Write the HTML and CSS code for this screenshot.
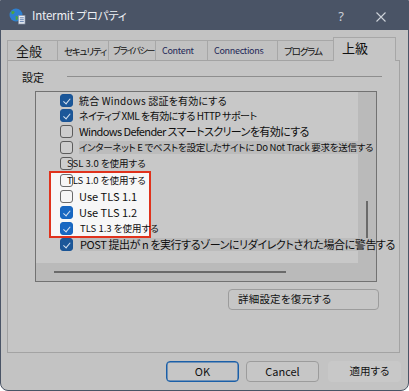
FILE: index.html
```html
<!DOCTYPE html>
<html lang="ja">
<head>
<meta charset="utf-8">
<title>Intermit プロパティ</title>
<link rel="stylesheet" href="styles.css">
</head>
<body>
<div class="window">
  <div class="titlebar">
    <svg class="app-icon" width="18" height="18" viewBox="0 0 18 18">
      <circle cx="8" cy="8" r="6.5" fill="#2f7fcf"/>
      <path d="M3.2 4.6 q2.2 -1.6 3.6 0.4 q-0.6 2.2 -3 2.2 z M7.6 9 q2.4 -0.4 2.4 2 q-0.8 2.2 -2.2 2.4 z" fill="#4aa63c"/>
      <rect x="10.5" y="8.5" width="6.5" height="8.5" fill="#e9edf3" stroke="#8592a6" stroke-width="0.7"/>
      <path d="M11.8 10.8h4 M11.8 12.7h4 M11.8 14.6h4" stroke="#3f649e" stroke-width="0.8"/>
    </svg>
    <span class="title">Intermit プロパティ</span>
    <span class="help">?</span>
    <svg class="close" width="10" height="10" viewBox="0 0 10 10">
      <path d="M0.5 0.5 L9.5 9.5 M9.5 0.5 L0.5 9.5" stroke="#cdd2d9" stroke-width="1.1"/>
    </svg>
  </div>
  <div class="body">
    <div class="tabs">
      <div class="tab tab-general">全般</div>
      <div class="tab tab-security">セキュリティ</div>
      <div class="tab tab-privacy">プライバシー</div>
      <div class="tab tab-content">Content</div>
      <div class="tab tab-connections">Connections</div>
      <div class="tab tab-programs">プログラム</div>
      <div class="tab tab-advanced active">上級</div>
    </div>
    <div class="panel">
      <div class="group-head">
        <span class="group-label">設定</span>
        <div class="rule"></div>
      </div>
      <div class="listbox">
        <div class="rows">
          <div class="row r1"><span class="cb on"></span><span class="lbl">統合 Windows 認証を有効にする</span></div>
          <div class="row r2"><span class="cb on"></span><span class="lbl">ネイティブ XML を有効にする HTTP サポート</span></div>
          <div class="row r3"><span class="cb"></span><span class="lbl">Windows Defender スマートスクリーンを有効にする</span></div>
          <div class="row r4"><span class="cb"></span><span class="lbl sel">インターネット E でベストを設定したサイトに Do Not Track 要求を送信する</span></div>
          <div class="row r5"><span class="cb"></span><span class="lbl tight">SSL 3.0 を使用する</span></div>
          <div class="row r6"><span class="cb lit"></span><span class="lbl tight">TLS 1.0 を使用する</span></div>
          <div class="row r7"><span class="cb lit"></span><span class="lbl">Use TLS 1.1</span></div>
          <div class="row r8"><span class="cb on lit"></span><span class="lbl">Use TLS 1.2</span></div>
          <div class="row r9"><span class="cb on lit"></span><span class="lbl">TLS 1.3 を使用する</span></div>
          <div class="row r10"><span class="cb on"></span><span class="lbl sel">POST 提出が n を実行するゾーンにリダイレクトされた場合に警告する</span></div>
        </div>
        <div class="vscroll"><div class="vthumb"></div></div>
        <div class="hscroll"><div class="hthumb"></div></div>
        <div class="corner"></div>
        <div class="redbox"></div>
      </div>
      <div class="restore-row">
        <button class="btn restore">詳細設定を復元する</button>
      </div>
    </div>
    <div class="buttons">
      <button class="btn ok">OK</button>
      <button class="btn cancel">Cancel</button>
      <button class="btn apply">適用する</button>
    </div>
  </div>
</div>
</body>
</html>
```

FILE: styles.css
```css
html, body {
  margin: 0;
  padding: 0;
  background: #ffffff;
}

body {
  font-family: "Noto Sans CJK JP", "Noto Sans", sans-serif;
  font-feature-settings: "palt";
  color: #111111;
}

.window {
  width: 409px;
  height: 391px;
  box-sizing: border-box;
  border: 1px solid #4a5466;
  border-radius: 0 0 8px 8px;
  background: #c3c3c3;
  overflow: hidden;
  display: flex;
  flex-direction: column;
}

/* ---------- title bar ---------- */
.titlebar {
  height: 29px;
  flex: none;
  background: #4a5466;
  display: flex;
  align-items: center;
  color: #eef0f3;
}

.app-icon {
  margin-left: 7px;
  margin-top: 1px;
}

.title {
  margin-left: 6px;
  font-size: 11.5px;
  letter-spacing: -0.2px;
  line-height: 1;
  margin-top: 1px;
}

.help {
  margin-left: auto;
  font-family: "Noto Sans", sans-serif;
  font-size: 13px;
  line-height: 1;
  color: #c9ced6;
  margin-top: 2px;
}

.close {
  margin-left: 32px;
  margin-right: 22px;
  margin-top: 2px;
}

/* ---------- body ---------- */
.body {
  flex: 1;
  display: flex;
  flex-direction: column;
  padding: 7px 8px 0 6px;
}

.tabs {
  height: 23px;
  display: flex;
  align-items: flex-end;
  position: relative;
  z-index: 1;
}

.tab {
  box-sizing: border-box;
  height: 20px;
  border: 1px solid #a7a7a7;
  border-bottom: none;
  border-right: none;
  background: #c1c1c1;
  display: flex;
  align-items: center;
  padding-left: 6px;
  font-size: 9.5px;
  letter-spacing: -1.2px;
  white-space: nowrap;
  color: #111;
}

.tab-general { width: 50px; padding-left: 8px; font-size: 13px; letter-spacing: 0; }
.tab-security { width: 51px; }
.tab-privacy { width: 47px; padding-left: 4px; font-size: 9px; letter-spacing: -1.4px; }
.tab-content { width: 52px; font-size: 9px; letter-spacing: -0.3px; color: #1d2656; }
.tab-connections { width: 70px; font-size: 9px; letter-spacing: -0.3px; color: #1d2656; }
.tab-programs { width: 56px; letter-spacing: -1.1px; }

.tab.active {
  width: 63px;
  height: 24px;
  margin-bottom: -1px;
  border-right: 1px solid #a7a7a7;
  background: #c5c5c5;
  padding-left: 8px;
  padding-bottom: 5px;
  font-size: 13px;
  letter-spacing: 0;
}

.panel {
  height: 293px;
  box-sizing: border-box;
  border: 1px solid #a3a3a3;
  background: #c5c5c5;
  display: flex;
  flex-direction: column;
}

.group-head {
  height: 30px;
  display: flex;
  align-items: center;
  padding-left: 14px;
  padding-right: 17px;
}

.group-label {
  width: 45px;
  font-size: 11px;
  line-height: 1;
  margin-top: 2px;
}

.rule {
  flex: 1;
  height: 1px;
  background: #8e8e8e;
}

/* ---------- list box ---------- */
.listbox {
  position: relative;
  margin-left: 27px;
  width: 342px;
  height: 191px;
  box-sizing: border-box;
  border: 1px solid #727272;
  background: #c8c8c8;
  display: grid;
  grid-template-columns: 322px 18px;
  grid-template-rows: 171px 18px;
}

.rows {
  grid-column: 1;
  grid-row: 1;
  padding-top: 1px;
  position: relative;
  z-index: 2;
  min-width: 0;
}

.row {
  display: flex;
  align-items: center;
  padding-left: 24px;
  height: 16px;
  white-space: nowrap;
}

.r1, .r2 { height: 15px; }
.r5, .r10 { height: 17px; }

.cb {
  flex: none;
  width: 13px;
  height: 13px;
  box-sizing: border-box;
  border: 1px solid #5c5c5c;
  border-radius: 3px;
  background: #cdcdcd;
  position: relative;
}

.cb.lit {
  background: #f6f6f6;
  border-color: #6a6a6a;
}

.cb.on {
  border-color: #1a5495;
  background: #1b5799;
}

.cb.on.lit {
  border-color: #1565c0;
  background: #1868c2;
}

.cb.on::after {
  content: "";
  position: absolute;
  left: 4px;
  top: 2px;
  width: 3px;
  height: 5.5px;
  border-right: 1px solid #d7e2f0;
  border-bottom: 1px solid #d7e2f0;
  transform: rotate(40deg);
}

.lbl {
  position: relative;
  margin-left: 6px;
  font-size: 9.5px;
  line-height: 13px;
  color: #0e0e0e;
}

.lbl.tight {
  margin-left: -6px;
}

.lbl.sel {
  flex: 1;
  background: #bcbcbc;
  min-width: 0;
}

.r1 .lbl { font-size: 10px; letter-spacing: 0.2px; }
.r2 .lbl { font-size: 10px; letter-spacing: -0.5px; }
.r3 .lbl { font-size: 11px; letter-spacing: -0.6px; }
.r4 .lbl { font-size: 9.5px; letter-spacing: -0.27px; }
.r7 .lbl, .r8 .lbl { font-size: 11px; }
.r9 .lbl { margin-left: 7px; }
.r10 .lbl { font-size: 11px; margin-left: 7px; letter-spacing: -0.42px; }

.vscroll {
  grid-column: 2;
  grid-row: 1;
  background: #bababa;
  position: relative;
}

.vthumb {
  position: absolute;
  left: 8px;
  top: 109px;
  width: 2px;
  height: 37px;
  background: #6a6a6a;
}

.hscroll {
  grid-column: 1;
  grid-row: 2;
  background: #bababa;
  position: relative;
}

.hthumb {
  position: absolute;
  left: 18px;
  top: 8px;
  width: 232px;
  height: 2px;
  background: #6a6a6a;
}

.corner {
  grid-column: 2;
  grid-row: 2;
  background: #bababa;
}

.redbox {
  position: absolute;
  left: 13px;
  top: 79px;
  width: 102px;
  height: 67px;
  box-sizing: border-box;
  border: 2px solid #e0321c;
  background: #f7f7f7;
  z-index: 1;
}

/* ---------- buttons ---------- */
.restore-row {
  display: flex;
  justify-content: flex-end;
  padding-right: 20px;
  margin-top: 7px;
}

.btn {
  font-family: "Noto Sans CJK JP", "Noto Sans", sans-serif;
  font-feature-settings: "palt";
  box-sizing: border-box;
  height: 21px;
  border-radius: 4px;
  border: 1px solid #9c9c9c;
  background: #c6c6c6;
  color: #111;
  padding: 0;
  margin: 0;
  line-height: 1;
}

.restore {
  width: 151px;
  text-align: left;
  padding-left: 9px;
  font-size: 10.5px;
  letter-spacing: 0.2px;
}

.buttons {
  display: flex;
  justify-content: flex-end;
  gap: 7px;
  margin-top: 8px;
  margin-right: -1px;
}

.ok, .cancel, .apply {
  width: 73px;
  font-size: 11px;
}

.ok {
  border: 1px solid #1a5fa8;
  box-shadow: inset 0 0 0 0.5px #1a5fa8;
}

.apply {
  margin-left: 2px;
  padding-left: 10px;
  border-color: #c8c8c8;
  background: #c8c8c8;
  font-size: 10.5px;
}
```
